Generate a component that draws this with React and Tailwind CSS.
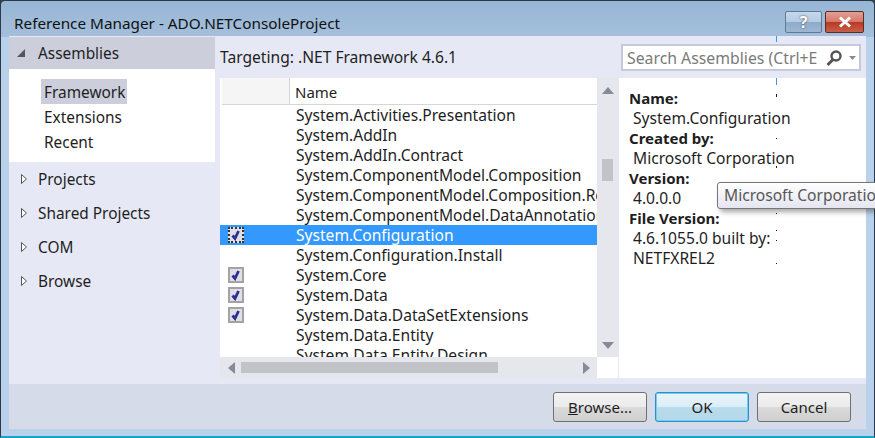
// App.jsx
const rows = [
    { name: 'System.Activities.Presentation' },
    { name: 'System.AddIn' },
    { name: 'System.AddIn.Contract' },
    { name: 'System.ComponentModel.Composition' },
    { name: 'System.ComponentModel.Composition.Registration' },
    { name: 'System.ComponentModel.DataAnnotations' },
    { name: 'System.Configuration', checked: true, selected: true },
    { name: 'System.Configuration.Install' },
    { name: 'System.Core', checked: true },
    { name: 'System.Data', checked: true },
    { name: 'System.Data.DataSetExtensions', checked: true },
    { name: 'System.Data.Entity' },
    { name: 'System.Data.Entity.Design' },
];

// stray marks left in the capture, at x=776
const marks = [
    { top: 36, height: 6, color: '#3399ff' },
    { top: 78, height: 7, color: '#3399ff' },
    { top: 94, height: 3, color: '#1e1e1e' },
    { top: 138, height: 1, color: '#1e1e1e' },
    { top: 166, height: 2, color: '#1e1e1e' },
    { top: 213, height: 1, color: '#1e1e1e' },
    { top: 230, height: 1, color: '#1e1e1e' },
    { top: 240, height: 1, color: '#1e1e1e' },
    { top: 263, height: 1, color: '#1e1e1e' },
];

function Tri({ dir, className }) {
    const points = {
        up: '0,7 6,0 12,7',
        down: '0,0 12,0 6,7',
        left: '7,0 7,12 0,6',
        right: '0,0 7,6 0,12',
    }[dir];
    const view = dir === 'up' || dir === 'down' ? '0 0 12 7' : '0 0 7 12';
    return (
        <svg viewBox={view} preserveAspectRatio="none" className={className}>
            <polygon points={points} fill="#868999" />
        </svg>
    );
}

function TreeItem({ label }) {
    return (
        <div className="h-[34px] flex items-center">
            <svg viewBox="0 0 6 10" className="w-[6px] h-[10px] ml-[12px] mr-[11px]">
                <polygon points="0.5,0.5 5.5,5 0.5,9.5" fill="#fff" stroke="#555" />
            </svg>
            <span className="pt-[2px]">{label}</span>
        </div>
    );
}

function Check({ focused }) {
    return (
        <div className={`w-[16px] h-[16px] ml-[8px] border-2 flex items-center justify-center bg-[#dedfe8] ${focused ? 'border-dotted border-[#333]' : 'border-[#a3a3a3]'}`}>
            <svg viewBox="0 0 12 12" className="w-[12px] h-[12px]">
                <path d="M2.5 6.5 L5 9.5 L8.5 2" fill="none" stroke="#2f2f8f" strokeWidth="2.8" />
            </svg>
        </div>
    );
}

function Row({ row }) {
    return (
        <div className={`h-[20px] shrink-0 flex items-center whitespace-nowrap text-[15.6px] ${row.selected ? 'bg-[#3399ff] text-white' : 'text-[#1e1e1e]'}`}>
            <div className="w-[76px] shrink-0">{row.checked && <Check focused={row.selected} />}</div>
            <span>{row.name}</span>
        </div>
    );
}

function DialogButton({ children, primary }) {
    return (
        <button className={`relative w-[94px] h-[30px] rounded-[3px] border text-[#1e1e1e] ${primary ? 'border-[#2c8ec4] ring-1 ring-inset ring-[#6fd0f5] bg-[linear-gradient(#e9f5fb_0%,#dcedf7_48%,#b9dcec_52%,#b4d8ea_100%)]' : 'border-[#707070] bg-[linear-gradient(#f4f4f4_0%,#ebebeb_48%,#dadada_52%,#cfcfcf_100%)]'}`}>
            {children}
        </button>
    );
}

export default function App() {
    return (
        <div className="relative w-[875px] h-[438px] overflow-hidden bg-[#3a3f45] text-[15px] leading-[20px] text-[#1e1e1e] font-['Noto_Sans',sans-serif]">
            <div className="h-full flex flex-col rounded-t-[5px] border border-[#2b3a48] border-b-2 border-b-[#17a5c4] bg-[linear-gradient(#97b6d5_0px,#a4bfdb_36px,#b9d1ea_36px)]">
                {/* title bar */}
                <div className="h-[35px] shrink-0 flex items-start">
                    <span className="ml-[13px] mt-[12px] text-[15.3px] text-[#111]">Reference Manager - ADO.NETConsoleProject</span>
                    <div className="ml-auto mr-[10px] mt-[10px] flex gap-[3px]">
                        <div className="w-[37px] h-[22px] rounded-[2px] border border-[#5d7a98] flex items-center justify-center font-bold text-[16px] text-white [text-shadow:0_0_2px_#333] bg-[linear-gradient(#c5d8ec_0%,#b5cbe2_50%,#8eabc9_52%,#9db8d4_100%)]">?</div>
                        <div className="w-[39px] h-[22px] rounded-[2px] border border-[#5e2b2b] flex items-center justify-center bg-[linear-gradient(#e0a093_0%,#d5776a_50%,#b73a22_52%,#c9604c_100%)]">
                            <svg viewBox="0 0 14 12" className="w-[14px] h-[12px]">
                                <path d="M2 1.5 L12 10.5 M12 1.5 L2 10.5" stroke="#fff" strokeWidth="3" />
                            </svg>
                        </div>
                    </div>
                </div>

                {/* client area */}
                <div className="flex-1 min-h-0 mx-[8px] flex flex-col bg-[#e6e9f5]">
                    <div className="flex-1 min-h-0 flex">
                        {/* left tree */}
                        <div className="w-[206px] shrink-0 flex flex-col text-[15.4px]">
                            <div className="h-[32px] mt-[1px] flex items-center bg-[#cccedb]">
                                <svg viewBox="0 0 8 8" className="w-[8px] h-[8px] ml-[8px] mr-[13px]">
                                    <polygon points="8,0 8,8 0,8" fill="#555" />
                                </svg>
                                <span className="pt-[2px]">Assemblies</span>
                            </div>
                            <div className="h-[93px] bg-white pt-[10px]">
                                <div className="w-[86px] h-[25px] ml-[32px] pl-[3px] pt-[2px] flex items-center bg-[#cccedb]">Framework</div>
                                <div className="h-[25px] ml-[35px] pt-[2px] flex items-center">Extensions</div>
                                <div className="h-[25px] ml-[35px] pt-[2px] flex items-center">Recent</div>
                            </div>
                            <div>
                                <TreeItem label="Projects" />
                                <TreeItem label="Shared Projects" />
                                <TreeItem label="COM" />
                                <TreeItem label="Browse" />
                            </div>
                        </div>

                        {/* right side */}
                        <div className="flex-1 min-w-0 ml-[5px] flex flex-col">
                            <div className="h-[42px] shrink-0 flex items-start text-[15.6px]">
                                <span className="mt-[11px]">Targeting: .NET Framework 4.6.1</span>
                                <div className="ml-auto mr-[5px] mt-[8px] w-[240px] h-[27px] flex items-center border-2 border-[#c4cad9] bg-white text-[#7a7a7a]">
                                    <span className="w-[190px] ml-[4px] overflow-hidden whitespace-nowrap text-[15.8px]">Search Assemblies (Ctrl+E)</span>
                                    <svg viewBox="0 0 18 18" className="w-[18px] h-[18px] ml-[8px]">
                                        <circle cx="11" cy="7" r="4.5" fill="none" stroke="#555" strokeWidth="2.4" />
                                        <path d="M8 10.5 L2.5 16" stroke="#555" strokeWidth="3" />
                                    </svg>
                                    <Tri dir="down" className="w-[7px] h-[4px] ml-[6px]" />
                                </div>
                            </div>
                            <div className="h-[300px] shrink-0 flex">
                                {/* list */}
                                <div className="w-[398px] shrink-0 grid grid-cols-[377px_21px] grid-rows-[279px_21px]">
                                    <div className="min-w-0 overflow-hidden bg-white flex flex-col">
                                        <div className="h-[27px] shrink-0 flex border-b border-[#d6d6d6] ml-[2px]">
                                            <div className="w-[68px] bg-[#f5f5f5] border-r border-[#d6d6d6]" />
                                            <div className="flex-1 pl-[5px] pt-[4px]">Name</div>
                                        </div>
                                        {rows.map((row) => (
                                            <Row key={row.name} row={row} />
                                        ))}
                                    </div>
                                    <div className="bg-[#e6e7ed] flex flex-col items-center">
                                        <Tri dir="up" className="w-[12px] h-[7px] mt-[9px]" />
                                        <div className="w-[11px] h-[22px] mt-[65px] bg-[#c2c3c9]" />
                                        <Tri dir="down" className="w-[12px] h-[7px] mt-auto mb-[8px]" />
                                    </div>
                                    <div className="bg-[#e6e7ed] flex items-center">
                                        <Tri dir="left" className="w-[7px] h-[12px] ml-[8px]" />
                                        <div className="w-[257px] h-[11px] ml-[6px] bg-[#c2c3c9]" />
                                        <Tri dir="right" className="w-[7px] h-[12px] ml-auto mr-[7px]" />
                                    </div>
                                    <div className="bg-white" />
                                </div>
                                {/* details */}
                                <div className="flex-1 ml-[1px] bg-white pt-[10px] pl-[10px] text-[15.6px]">
                                    <div className="font-bold text-[15px]">Name:</div>
                                    <div className="pl-[4px]">System.Configuration</div>
                                    <div className="font-bold text-[15px]">Created by:</div>
                                    <div className="pl-[4px]">Microsoft Corporation</div>
                                    <div className="font-bold text-[15px]">Version:</div>
                                    <div className="pl-[4px]">4.0.0.0</div>
                                    <div className="font-bold text-[15px]">File Version:</div>
                                    <div className="pl-[4px]">4.6.1055.0 built by:</div>
                                    <div className="pl-[4px]">NETFXREL2</div>
                                </div>
                            </div>
                            <div className="h-[6px] shrink-0" />
                        </div>
                    </div>

                    {/* button bar */}
                    <div className="h-[45px] shrink-0 flex items-start justify-end gap-[8px] pt-[8px] pr-[15px] bg-[#d6dbe9]">
                        <DialogButton><span className="underline">B</span>rowse...</DialogButton>
                        <DialogButton primary>OK</DialogButton>
                        <DialogButton>Cancel</DialogButton>
                    </div>
                </div>
                <div className="h-[7px] shrink-0" />
            </div>

            {marks.map((mark) => (
                <div
                    key={mark.top}
                    className="absolute left-[776px] w-[1px]"
                    style={{ top: mark.top, height: mark.height, backgroundColor: mark.color }}
                />
            ))}

            {/* tooltip */}
            <div className="absolute left-[717px] top-[182px] w-[200px] h-[27px] pl-[6px] pb-[2px] flex items-center whitespace-nowrap rounded-[3px] border border-[#767676] text-[15.6px] text-[#575757] bg-[linear-gradient(#ffffff,#e4e5f0)] shadow-[3px_3px_5px_rgba(0,0,0,0.35)]">
                Microsoft Corporation
            </div>
        </div>
    );
}
